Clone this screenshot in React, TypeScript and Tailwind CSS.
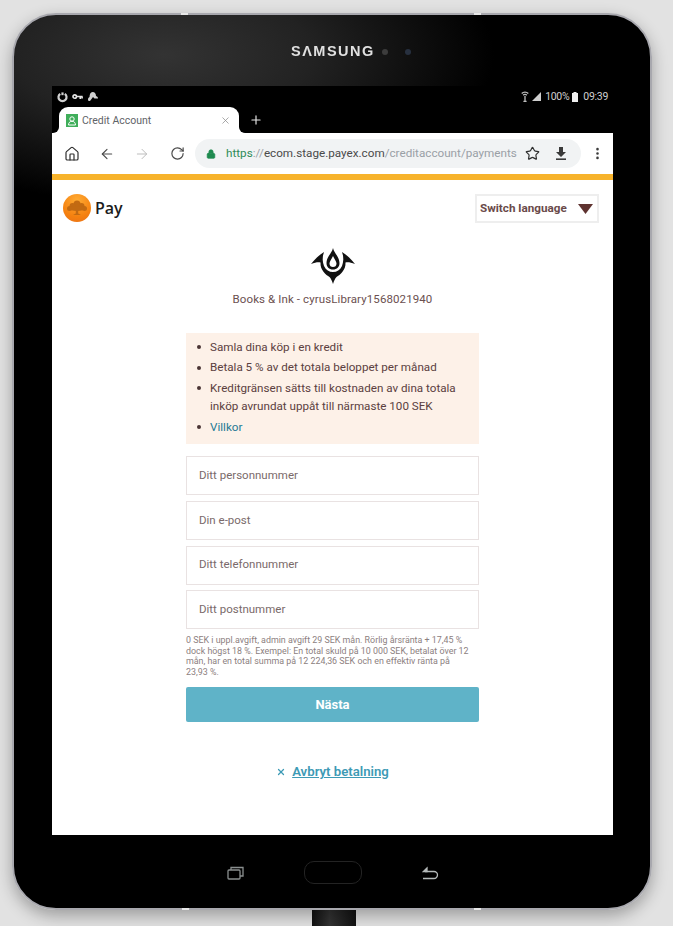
import { ArrowLeft, ArrowRight, Home, Lock, MoreVertical, Plus, RotateCw, Star, X } from "lucide-react";

const BULLETS = [
  "Samla dina köp i en kredit",
  "Betala 5 % av det totala beloppet per månad",
  "Kreditgränsen sätts till kostnaden av dina totala inköp avrundat uppåt till närmaste 100 SEK",
];

const FIELDS = ["Ditt personnummer", "Din e-post", "Ditt telefonnummer", "Ditt postnummer"];

function StatusBar() {
  return (
    <div className="flex h-[21px] items-center justify-between bg-black pl-[5px] pr-[5px] text-[10.5px] text-[#cfcfcf]">
      <div className="flex items-center gap-[4px]">
        <svg width="11" height="12" viewBox="0 0 12 12" fill="none" stroke="#d0d0d0" strokeWidth="2.400">
          <path d="M3.500 2.500a4.400 4.400 0 1 0 5 0" />
          <path d="M6 1v3" />
        </svg>
        <svg width="11" height="8" viewBox="0 0 12 8" fill="none" stroke="#e4e4e4" strokeWidth="1.800">
          <circle cx="3" cy="3.500" r="1.900" />
          <path d="M5 3.500h6.500M9 3.500v2.600M11 3.500v2" />
        </svg>
        <svg width="11" height="10" viewBox="0 0 11 10" fill="#d0d0d0">
          <path d="M5.500 0C8 0 9 2 9 4c1.500.3 2 1.500 2 2.500H7.500L6 5 3 9H1.500C.5 7.500 1 5.500 2.500 5 2.500 2.500 3.500 0 5.500 0z" />
        </svg>
      </div>
      <div className="flex items-center gap-[3px] tracking-[-0.3px]">
        <svg width="8" height="11" viewBox="0 0 8 11" fill="none" stroke="#bdbdbd" strokeWidth="1.300">
          <path d="M.7 2.500a4.500 4.500 0 0 1 6.600 0M2.200 4.200a2.400 2.400 0 0 1 3.600 0M4 5v6M2.400 10.500h3.200" />
        </svg>
        <svg width="9" height="9" viewBox="0 0 9 9" fill="#cfcfcf" className="mr-[1px]">
          <path d="M9 0v9H0z" />
        </svg>
        <span>100%</span>
        <svg width="6" height="10" viewBox="0 0 6 10" fill="#f0f0f0">
          <path d="M1.500 0h3v1H6v9H0V1h1.500z" />
        </svg>
        <span className="ml-[2px]">09:39</span>
      </div>
    </div>
  );
}

function TabStrip() {
  return (
    <div className="flex h-[26px] items-end bg-black pl-[7px]">
      <div className="relative flex h-[26px] w-[180px] items-center rounded-t-[9px] bg-white pl-[7px] pr-[8px]">
        <div className="absolute -left-[6px] bottom-0 h-[6px] w-[6px] bg-white">
          <div className="h-full w-full rounded-br-[6px] bg-black" />
        </div>
        <div className="absolute -right-[6px] bottom-0 h-[6px] w-[6px] bg-white">
          <div className="h-full w-full rounded-bl-[6px] bg-black" />
        </div>
        <div className="flex h-[13px] w-[12px] items-center justify-center bg-[#3fae5a]">
          <svg width="10" height="11" viewBox="0 0 10 11" fill="none" stroke="#ffffff" strokeWidth="1">
            <circle cx="5" cy="4" r="2.200" />
            <path d="M1.500 10c0-5 7-5 7 0z" />
          </svg>
        </div>
        <span className="ml-[4px] flex-1 pt-[1px] text-[10.5px] text-[#5f6368]">Credit Account</span>
        <X size={11} color="#8a8a8a" strokeWidth={1.6} />
      </div>
      <div className="ml-[10px] flex h-[26px] items-center">
        <Plus size={14} color="#e8e8e8" strokeWidth={2} />
      </div>
    </div>
  );
}

function Toolbar() {
  return (
    <div className="flex h-[41px] items-center bg-white pl-[12px] pr-[8px]">
      <Home size={16} color="#2f2f2f" strokeWidth={1.8} className="shrink-0" />
      <ArrowLeft size={16} color="#4a4a4a" strokeWidth={1.7} className="ml-[19px] shrink-0" />
      <ArrowRight size={16} color="#bdbdbd" strokeWidth={1.5} className="ml-[19px] shrink-0" />
      <RotateCw size={15} color="#4a4a4a" strokeWidth={1.9} className="ml-[20px] shrink-0" />
      <div className="ml-[10px] flex h-[29px] w-[386px] shrink-0 items-center rounded-full bg-[#f1f3f4] pl-[11px]">
        <Lock size={10} color="#1e8a4f" fill="#1e8a4f" strokeWidth={2} className="shrink-0" />
        <span className="ml-[10px] w-[292px] shrink-0 whitespace-nowrap text-[11.7px] text-[#9aa0a6]">
          <span className="text-[#2e8b57]">https</span>://<span className="text-[#4a4a4a]">ecom.stage.payex.com</span>/creditaccount/payments
        </span>
        <Star size={15} color="#2f2f2f" strokeWidth={1.9} className="ml-[7px] shrink-0" />
        <svg width="12" height="13" viewBox="0 0 12 13" fill="#3a3a3a" className="ml-[15px] shrink-0">
          <path d="M4 0h4v5h3L6 10 1 5h3z" />
          <path d="M1 11.400h10V13H1z" />
        </svg>
      </div>
      <MoreVertical size={15} color="#3a3a3a" strokeWidth={2.2} className="ml-[9px] shrink-0" />
    </div>
  );
}

function PayLogo() {
  return (
    <div className="flex items-center gap-[4px]">
      <div className="flex h-[28px] w-[28px] items-center justify-center rounded-full bg-[radial-gradient(circle_at_50%_22%,#ffab33,#f5800f_65%,#e8701a)]">
        <svg width="22" height="16" viewBox="0 0 22 16" fill="#c26a12">
          <circle cx="11" cy="4" r="3.500" />
          <circle cx="6.500" cy="6" r="3" />
          <circle cx="15.500" cy="6" r="3" />
          <circle cx="3.500" cy="8.500" r="2.500" />
          <circle cx="18.500" cy="8.500" r="2.500" />
          <ellipse cx="11" cy="8.500" rx="8" ry="2.500" />
          <path d="M9.800 10h2.400v3.500l2.800 1.500H7l2.800-1.500z" />
        </svg>
      </div>
      <span className="text-[16px] font-semibold text-[#1c1c1c] [font-family:'Open_Sans',sans-serif]">Pay</span>
    </div>
  );
}

function MerchantLogo() {
  return (
    <svg width="46" height="37" viewBox="0 0 46 37" fill="#111111">
      <path
        fillRule="evenodd"
        d="M23 0C24 5 29.500 9 29.500 15C29.500 19 27 21.500 23 21.500C19 21.500 16.500 19 16.500 15C16.500 9 22 5 23 0ZM23 8C21.500 11 19.500 13.500 19.500 15.500C19.500 18 21 19 23 19C25 19 26.500 18 26.500 15.500C26.500 13.500 24.500 11 23 8Z"
      />
      <path d="M1 16C5 11 9 7 14 4C12 9 12.500 14 14 18C16 22 19 24 23 24C27 24 30 22 32 18C33.500 14 34 9 32 4C37 7 41 11 45 16C41 14.500 38 14 35.500 14.500C36 22 30 27 26.500 29C25 30.500 24 33 23 36C22 33 21 30.500 19.500 29C16 27 10 22 10.500 14.500C8 14 5 14.500 1 16Z" />
    </svg>
  );
}

export default function App() {
  return (
    <div className="h-[926px] w-[673px] overflow-hidden bg-[#e2e2e2] pl-[12px] pt-[13px] [font-family:Roboto,sans-serif]">
      <div className="relative h-[897px] w-[640px] rounded-[44px] border-2 border-[#a8a8ae] bg-[radial-gradient(ellipse_330px_150px_at_150px_40px,#333333,#222222_45%,#000000)] pt-[71px] shadow-[0_6px_16px_rgba(0,0,0,0.3)] blur-[0.6px]">
        {/* antenna bands on the metal edge */}
        <div className="absolute -top-[2px] left-[167px] h-[2px] w-[7px] bg-[#e8e8e8]" />
        <div className="absolute -top-[2px] left-[460px] h-[2px] w-[7px] bg-[#e8e8e8]" />
        <div className="absolute -bottom-[2px] left-[168px] h-[2px] w-[7px] bg-[#e8e8e8]" />
        <div className="absolute -bottom-[2px] left-[460px] h-[2px] w-[7px] bg-[#e8e8e8]" />
        <div className="absolute left-0 right-0 top-[26px] flex items-center pl-[277px]">
          <span className="text-[14.500px] font-bold tracking-[1.500px] text-[#e0e0e0] [font-family:'Liberation_Sans',sans-serif]">SΛMSUNG</span>
          <span className="ml-[7px] h-[6px] w-[6px] rounded-full bg-[#3c3c3c]" />
          <span className="ml-[17px] h-[6px] w-[6px] rounded-full bg-[#27303f]" />
        </div>
        <div className="ml-[38px] w-[561px]">
          <StatusBar />
          <TabStrip />
          <Toolbar />
          <div className="h-[6px] bg-[#f7b32b]" />
          <div className="flex h-[655px] flex-col bg-white text-[#5b4040]">
            <div className="flex items-start justify-between pl-[11px] pr-[14px] pt-[14px]">
              <PayLogo />
              <button className="flex h-[29px] w-[124px] items-center justify-between border-2 border-[#eeeeee] pl-[3px] pr-[4px] text-[11.700px] font-bold text-[#6a4a4a]">
                Switch language
                <svg width="15" height="10" viewBox="0 0 15 10" fill="#5f3330">
                  <path d="M0 0h15L7.500 10z" />
                </svg>
              </button>
            </div>
            <div className="mt-[25px] flex flex-col items-center">
              <MerchantLogo />
              <p className="mt-[6px] text-[11.500px] tracking-[0.1px] text-[#6b5050]">Books &amp; Ink - cyrusLibrary1568021940</p>
            </div>
            <div className="ml-[134px] mt-[25px] flex w-[293px] flex-col">
              <ul className="h-[111px] bg-[#fdf1e8] pl-[11px] pr-[6px] pt-[3.500px] text-[11.650px] text-[#5b4040]">
                {BULLETS.map((b) => (
                  <li key={b} className="flex py-[1px] leading-[18.500px]">
                    <span className="flex h-[18.500px] w-[13px] shrink-0 items-center">
                      <span className="h-[4px] w-[4px] rounded-full bg-[#4a3434]" />
                    </span>
                    <span>{b}</span>
                  </li>
                ))}
                <li className="flex py-[1px] leading-[18.500px]">
                  <span className="flex h-[18.500px] w-[13px] shrink-0 items-center">
                    <span className="h-[4px] w-[4px] rounded-full bg-[#4a3434]" />
                  </span>
                  <span className="text-[#1f7a94]">Villkor</span>
                </li>
              </ul>
              <div className="mt-[12px] flex flex-col gap-[5.670px]">
                {FIELDS.map((f) => (
                  <div key={f} className="flex h-[39px] items-center border border-[#e9e2e2] pl-[12px] text-[11.500px] text-[#7a6a6a]">
                    {f}
                  </div>
                ))}
              </div>
              <p className="mt-[6px] pr-[8px] text-[8.900px] leading-[10.500px] text-[#8c8080]">
                0 SEK i uppl.avgift, admin avgift 29 SEK mån. Rörlig årsränta + 17,45 % dock högst 18 %. Exempel: En total skuld på 10 000 SEK, betalat över 12 mån, har en total summa på 12 224,36 SEK och en effektiv ränta på 23,93 %.
              </p>
              <button className="mt-[10px] h-[35px] rounded-[2px] bg-[#5fb3c8] text-[13px] font-bold text-white">Nästa</button>
              <div className="mt-[40px] flex items-center justify-center gap-[6px] text-[#3d9ab5]">
                <X size={10} color="#3d9ab5" strokeWidth={3} />
                <span className="text-[13.200px] font-semibold underline">Avbryt betalning</span>
              </div>
            </div>
          </div>
          <div className="flex h-[75px] items-center justify-center">
            <svg width="18" height="14" viewBox="0 0 18 14" fill="none" stroke="#8a8f8f" strokeWidth="1.300">
              <rect x="1" y="4" width="12" height="9" rx="1" />
              <path d="M4 4V1.500h12V10h-3" />
            </svg>
            <div className="ml-[59px] h-[23px] w-[58px] rounded-[10px] border border-[#232323]" />
            <svg width="17" height="14" viewBox="0 0 17 14" fill="none" stroke="#b5baba" strokeWidth="1.300" className="ml-[60px]">
              <path d="M1 12.500h11a3.500 3.500 0 0 0 0-7H3" />
              <path d="M5 2 1.500 5.500 5 5.500z" fill="#b5baba" />
            </svg>
          </div>
        </div>
      </div>
      <div className="ml-[300px] h-[16px] w-[44px] bg-[linear-gradient(90deg,#111,#333_40%,#111)]" />
    </div>
  );
}
